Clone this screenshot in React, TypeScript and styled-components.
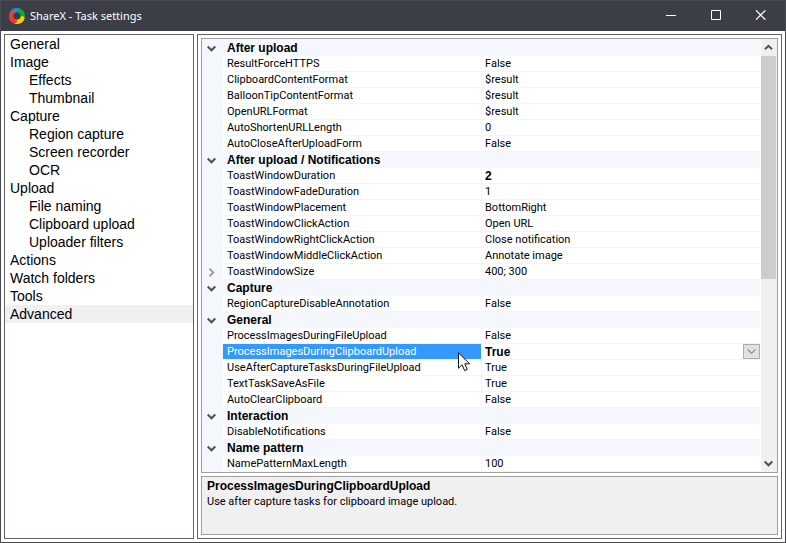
import React from "react";
import styled, { createGlobalStyle, css } from "styled-components";

const GlobalStyle = createGlobalStyle`
  * { box-sizing: border-box; }
  body { margin: 0; background: #fff; }
  button { font: inherit; border: 0; padding: 0; margin: 0; background: none; color: inherit; }
`;

const Window = styled.div`
  display: flex;
  flex-direction: column;
  height: 100vh;
  border: 1px solid #484a53;
  background: #fff;
  color: #000;
  font: 11px/16px Roboto, "Liberation Sans", sans-serif;
`;

const TitleBar = styled.header`
  display: flex;
  align-items: center;
  height: 30px;
  flex: none;
  padding: 0 2px 0 8px;
  background: #3b3d47;
  color: #fff;
`;

const Title = styled.h1`
  flex: 1;
  margin: 0 0 0 5px;
  font: 11px/16px "Noto Sans", "Open Sans", sans-serif;
`;

const CaptionButton = styled.button`
  display: grid;
  align-self: flex-start;
  place-items: center;
  width: 45px;
  height: 28px;
`;

const Body = styled.div`
  display: flex;
  flex: 1;
  min-height: 0;
  gap: 3px;
  padding: 3px;
`;

const Sidebar = styled.nav`
  flex: none;
  width: 190px;
  border: 1px solid #646464;
`;

const NavList = styled.ul`
  margin: 0;
  padding: 0;
  list-style: none;
`;

const NavLink = styled.a<{ $nested?: boolean; $active?: boolean }>`
  display: block;
  padding-left: ${(p) => (p.$nested ? 24 : 5)}px;
  background: ${(p) => (p.$active ? "#f0f0f0" : "transparent")};
  color: #000;
  font: 14px/18px "Liberation Sans", Arial, sans-serif;
  text-decoration: none;
`;

const Content = styled.main`
  display: flex;
  flex: 1;
  flex-direction: column;
  min-width: 0;
  gap: 3px;
  padding: 3px;
  border: 1px solid #646464;
`;

const GridFrame = styled.section`
  display: flex;
  flex: 1;
  min-height: 0;
  gap: 1px;
  border: 1px solid #a0a0a0;
`;

const GridViewport = styled.div`
  flex: 1;
  min-width: 0;
  overflow: hidden;
`;

const PropertyTable = styled.table`
  width: 100%;
  table-layout: fixed;
  border-spacing: 0;
  border-top: 1px solid #f4f7fc;
`;

const GutterCol = styled.col`
  width: 21px;
`;

const NameCol = styled.col`
  width: 259px;
`;

const Gutter = styled.td`
  height: 16px;
  padding: 0 0 0 4px;
  background: #f4f7fc;
  line-height: 0;
`;

const Category = styled.th`
  height: 16px;
  padding: 0 0 0 4px;
  background: #f4f7fc;
  font: 700 12px/15px "Liberation Sans", Arial, sans-serif;
  text-align: left;
`;

const cell = css`
  position: relative;
  height: 16px;
  padding: 1px 0 0 4px;
  border-bottom: 1px solid #f4f5f8;
  font-weight: 400;
  line-height: 14px;
  text-align: left;
  white-space: nowrap;
`;

const NameCell = styled.th<{ $selected?: boolean }>`
  ${cell}
  border-right: 1px solid #f4f5f8;
  background: ${(p) => (p.$selected ? "#3399ff" : "#fff")};
  background-clip: padding-box;
  color: ${(p) => (p.$selected ? "#fff" : "#000")};
`;

const ValueCell = styled.td<{ $strong?: boolean }>`
  ${cell}
  padding-left: 3px;
  ${(p) => p.$strong && css`font: 700 12px/14px "Liberation Sans", Arial, sans-serif;`}
`;

const Toggle = styled.button`
  display: grid;
  place-items: center;
  width: 11px;
  height: 15px;
`;

const DropButton = styled.button`
  position: absolute;
  top: 0;
  right: 0;
  display: grid;
  place-items: center;
  width: 17px;
  height: 15px;
  border: 1px solid #adadad;
  background: #e1e1e1;
`;

const Pointer = styled.svg`
  position: absolute;
  z-index: 1;
  top: 8px;
  right: 10px;
`;

const ScrollBar = styled.div`
  display: flex;
  flex: none;
  flex-direction: column;
  width: 16px;
  background: #f0f0f0;
`;

const ScrollButton = styled.button`
  display: grid;
  flex: none;
  place-items: center;
  width: 15px;
  height: 17px;
`;

const ScrollTrack = styled.div`
  flex: 1;
`;

const ScrollThumb = styled.div`
  width: 15px;
  height: 56%;
  background: #cdcdcd;
`;

const Help = styled.section`
  flex: none;
  min-height: 59px;
  padding: 1px 5px;
  border: 1px solid #a0a0a0;
  background: #f0f0f0;
`;

const HelpTitle = styled.h2`
  margin: 0;
  font: 700 12px/16px "Liberation Sans", Arial, sans-serif;
`;

const HelpText = styled.p`
  margin: 0;
  line-height: 15px;
`;

const Logo = () => (
  <svg width="16" height="16" viewBox="-8 -8 16 16" aria-hidden="true">
    {[
      ["#2b86f5", 0],
      ["#0fa83c", 90],
      ["#ffcb05", 180],
      ["#f0392b", 270],
    ].map(([color, turn]) => (
      <path
        key={color}
        fill={color as string}
        transform={`rotate(${turn})`}
        d="M-7.6 -2.6C-6.6 -6.6 -2.4 -8.6 1.4 -7.9C4.8 -7.2 6.2 -4 5 -.6C4 -3 2 -4.1 -.4 -3.7C-2.4 -3.3 -3.5 -2 -3.7 -.4C-5.8 .4 -7.6 -.6 -7.6 -2.6Z"
      />
    ))}
  </svg>
);

const Chevron = ({ d, color = "#505050", width = 2 }: { d: string; color?: string; width?: number }) => (
  <svg width="9" height="9" viewBox="0 0 9 9" fill="none" stroke={color} strokeWidth={width} aria-hidden="true">
    <path d={d} />
  </svg>
);

const DOWN = "M.7 2.5L4.5 6.3L8.3 2.5";
const UP = "M1 6.3L4.5 2.8L8 6.3";
const RIGHT = "M2.5 .7L6.3 4.5L2.5 8.3";

const nav: { label: string; nested?: boolean }[] = [
  { label: "General" },
  { label: "Image" },
  { label: "Effects", nested: true },
  { label: "Thumbnail", nested: true },
  { label: "Capture" },
  { label: "Region capture", nested: true },
  { label: "Screen recorder", nested: true },
  { label: "OCR", nested: true },
  { label: "Upload" },
  { label: "File naming", nested: true },
  { label: "Clipboard upload", nested: true },
  { label: "Uploader filters", nested: true },
  { label: "Actions" },
  { label: "Watch folders" },
  { label: "Tools" },
  { label: "Advanced" },
];

type Property = { name: string; value: string; strong?: boolean; expandable?: boolean };

const groups: { title: string; items: Property[] }[] = [
  {
    title: "After upload",
    items: [
      { name: "ResultForceHTTPS", value: "False" },
      { name: "ClipboardContentFormat", value: "$result" },
      { name: "BalloonTipContentFormat", value: "$result" },
      { name: "OpenURLFormat", value: "$result" },
      { name: "AutoShortenURLLength", value: "0" },
      { name: "AutoCloseAfterUploadForm", value: "False" },
    ],
  },
  {
    title: "After upload / Notifications",
    items: [
      { name: "ToastWindowDuration", value: "2", strong: true },
      { name: "ToastWindowFadeDuration", value: "1" },
      { name: "ToastWindowPlacement", value: "BottomRight" },
      { name: "ToastWindowClickAction", value: "Open URL" },
      { name: "ToastWindowRightClickAction", value: "Close notification" },
      { name: "ToastWindowMiddleClickAction", value: "Annotate image" },
      { name: "ToastWindowSize", value: "400; 300", expandable: true },
    ],
  },
  { title: "Capture", items: [{ name: "RegionCaptureDisableAnnotation", value: "False" }] },
  {
    title: "General",
    items: [
      { name: "ProcessImagesDuringFileUpload", value: "False" },
      { name: "ProcessImagesDuringClipboardUpload", value: "True", strong: true },
      { name: "UseAfterCaptureTasksDuringFileUpload", value: "True" },
      { name: "TextTaskSaveAsFile", value: "True" },
      { name: "AutoClearClipboard", value: "False" },
    ],
  },
  { title: "Interaction", items: [{ name: "DisableNotifications", value: "False" }] },
  { title: "Name pattern", items: [{ name: "NamePatternMaxLength", value: "100" }] },
];

const selectedName = "ProcessImagesDuringClipboardUpload";

const PropertyRow = ({ item }: { item: Property }) => {
  const selected = item.name === selectedName;
  return (
    <tr aria-selected={selected}>
      <Gutter>
        {item.expandable && (
          <Toggle aria-label={`Expand ${item.name}`}>
            <Chevron d={RIGHT} color="#a0a0a0" />
          </Toggle>
        )}
      </Gutter>
      <NameCell scope="row" $selected={selected}>
        {item.name}
        {selected && (
          <Pointer width="13" height="20" viewBox="0 0 13 20" aria-hidden="true">
            <path
              d="M.5 .8V16.2L4.1 12.8L6.6 18.6L9.2 17.5L6.8 11.8H11.6Z"
              fill="#fff"
              stroke="#111"
            />
          </Pointer>
        )}
      </NameCell>
      <ValueCell $strong={item.strong}>
        {item.value}
        {selected && (
          <DropButton aria-label="Choose value">
            <Chevron d={DOWN} width={1} />
          </DropButton>
        )}
      </ValueCell>
    </tr>
  );
};

export default function App() {
  return (
    <Window>
      <GlobalStyle />
      <TitleBar>
        <Logo />
        <Title>ShareX - Task settings</Title>
        <CaptionButton aria-label="Minimize">
          <svg width="10" height="10" stroke="#fff"><path d="M0 5.5H10" /></svg>
        </CaptionButton>
        <CaptionButton aria-label="Maximize">
          <svg width="10" height="10" stroke="#fff" fill="none"><path d="M.5 .5H9.5V9.5H.5Z" /></svg>
        </CaptionButton>
        <CaptionButton aria-label="Close">
          <svg width="11" height="10" stroke="#fff" strokeWidth="1.2"><path d="M1 .3L10.4 9.7M10.4 .3L1 9.7" /></svg>
        </CaptionButton>
      </TitleBar>
      <Body>
        <Sidebar aria-label="Settings sections">
          <NavList>
            {nav.map(({ label, nested }) => (
              <li key={label}>
                <NavLink
                  href="#"
                  $nested={nested}
                  $active={label === "Advanced"}
                  aria-current={label === "Advanced" ? "page" : undefined}
                >
                  {label}
                </NavLink>
              </li>
            ))}
          </NavList>
        </Sidebar>
        <Content>
          <GridFrame>
            <GridViewport>
              <PropertyTable>
                <colgroup>
                  <GutterCol />
                  <NameCol />
                  <col />
                </colgroup>
                {groups.map((group) => (
                  <tbody key={group.title}>
                    <tr>
                      <Gutter>
                        <Toggle aria-label={`Collapse ${group.title}`}>
                          <Chevron d={DOWN} />
                        </Toggle>
                      </Gutter>
                      <Category colSpan={2} scope="rowgroup">{group.title}</Category>
                    </tr>
                    {group.items.map((item) => (
                      <PropertyRow key={item.name} item={item} />
                    ))}
                  </tbody>
                ))}
              </PropertyTable>
            </GridViewport>
            <ScrollBar>
              <ScrollButton aria-label="Scroll up"><Chevron d={UP} /></ScrollButton>
              <ScrollTrack><ScrollThumb /></ScrollTrack>
              <ScrollButton aria-label="Scroll down"><Chevron d={DOWN} /></ScrollButton>
            </ScrollBar>
          </GridFrame>
          <Help>
            <HelpTitle>{selectedName}</HelpTitle>
            <HelpText>Use after capture tasks for clipboard image upload.</HelpText>
          </Help>
        </Content>
      </Body>
    </Window>
  );
}
